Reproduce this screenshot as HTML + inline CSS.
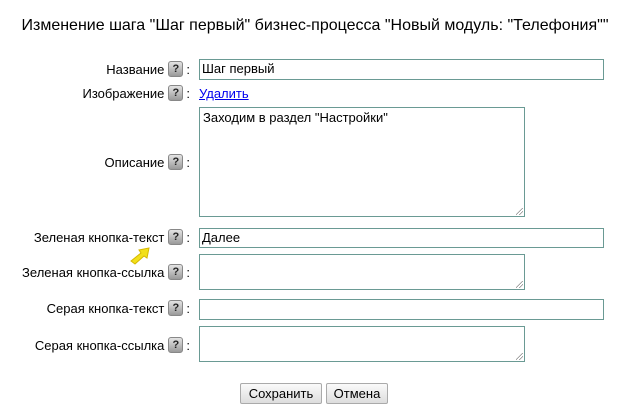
<!DOCTYPE html>
<html><head><meta charset="utf-8"><style>
body{margin:0;width:630px;height:413px;background:#fff;font-family:"Liberation Sans","DejaVu Sans",sans-serif;font-size:13px;color:#000;position:relative;overflow:hidden}
.t{position:absolute;top:17px;left:0;width:630px;text-align:center;font-size:16px}
.l{position:absolute;right:440px;white-space:nowrap;line-height:16px}
.q{display:inline-block;width:13px;height:14px;border:1px solid #888;border-radius:3px;background:linear-gradient(#e4e4e4,#9a9a9a);color:#222;font-size:11px;font-weight:bold;line-height:14px;text-align:center;vertical-align:middle;margin-top:-3px;margin-left:4px;margin-right:3px}
.i{position:absolute;left:199px;border:1px solid #6a9a94;box-sizing:border-box;background:#fff;padding:2px 2px;line-height:14px}
.b{position:absolute;top:383px;height:21px;border:1px solid #aaa;border-radius:2px;background:linear-gradient(#fafafa,#ddd);box-sizing:border-box;text-align:center;line-height:19px}
.rz{position:absolute;right:1px;bottom:1px;width:7px;height:7px;background:linear-gradient(135deg,transparent 45%,#888 45%,#888 52%,transparent 52%,transparent 70%,#888 70%,#888 77%,transparent 77%)}
</style></head><body>
<div class="t">Изменение шага "Шаг первый" бизнес-процесса "Новый модуль: "Телефония""</div>

<div class="l" style="top:62px">Название<span class="q">?</span>:</div>
<div class="i" style="top:59px;width:405px;height:21px">Шаг первый</div>

<div class="l" style="top:86px">Изображение<span class="q">?</span>:</div>
<div style="position:absolute;left:199px;top:86px;color:#00e;text-decoration:underline">Удалить</div>

<div class="l" style="top:155px">Описание<span class="q">?</span>:</div>
<div class="i" style="top:107px;width:326px;height:110px;padding:3px">Заходим в раздел "Настройки"<div class="rz"></div></div>

<div class="l" style="top:230px">Зеленая кнопка-текст<span class="q">?</span>:</div>
<div class="i" style="top:228px;width:405px;height:20px">Далее</div>
<svg style="position:absolute;left:128px;top:245px" width="24" height="20" viewBox="0 0 24 20"><path d="M3 16 L13 8 L11 5 L21 3 L19 13 L16 11 L7 19 Z" fill="#f2e01a" stroke="#d6b800" stroke-width="1"/></svg>

<div class="l" style="top:265px">Зеленая кнопка-ссылка<span class="q">?</span>:</div>
<div class="i" style="top:254px;width:326px;height:36px"><div class="rz"></div></div>

<div class="l" style="top:301px">Серая кнопка-текст<span class="q">?</span>:</div>
<div class="i" style="top:299px;width:405px;height:21px"></div>

<div class="l" style="top:338px">Серая кнопка-ссылка<span class="q">?</span>:</div>
<div class="i" style="top:326px;width:326px;height:36px"><div class="rz"></div></div>

<div class="b" style="left:240px;width:82px">Сохранить</div>
<div class="b" style="left:326px;width:62px">Отмена</div>
</body></html>
